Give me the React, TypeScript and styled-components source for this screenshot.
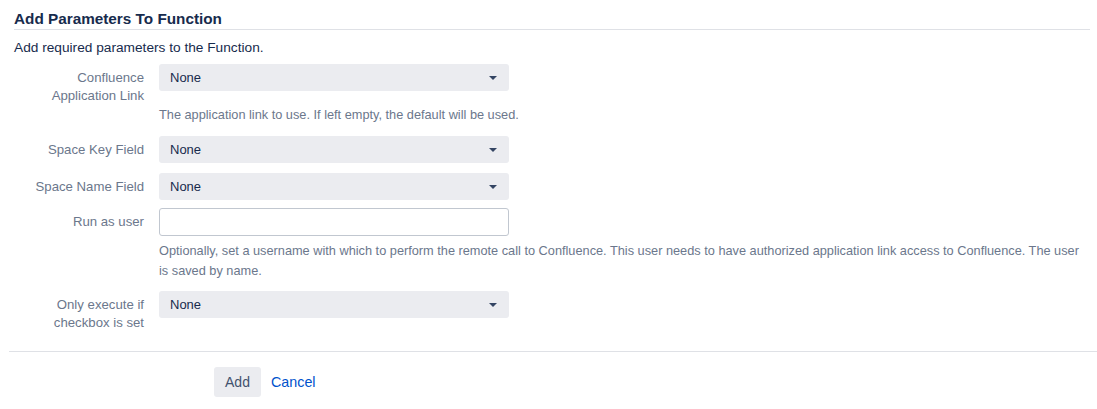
import React from "react";
import styled, { createGlobalStyle } from "styled-components";

const GlobalStyle = createGlobalStyle`
  body {
    margin: 0;
    background: #fff;
    font-family: "Liberation Sans", Arial, sans-serif;
    color: #172b4d;
  }
`;

const Page = styled.div`
  width: 1097px;
  height: 409px;
  overflow: hidden;
  padding-top: 9px;
  box-sizing: border-box;
`;

const Header = styled.div`
  margin: 0 7px 0 14px;
  border-bottom: 1px solid #dfe1e6;
`;

const Title = styled.h2`
  margin: 0;
  font-size: 15.3px;
  font-weight: 700;
  line-height: 20px;
  color: #172b4d;
`;

const Intro = styled.p`
  margin: 8px 0 6px 14px;
  font-size: 13.7px;
  line-height: 20px;
  color: #172b4d;
`;

const Form = styled.div`
  display: flex;
  flex-direction: column;
  padding-left: 14px;
`;

const Row = styled.div<{ $gap?: number }>`
  display: grid;
  grid-template-columns: 130px 1fr;
  column-gap: 15px;
  margin-bottom: ${(p) => p.$gap ?? 9}px;
`;

const Label = styled.label`
  text-align: right;
  font-size: 13.2px;
  line-height: 18px;
  color: #6b778c;
  padding-top: 5px;
`;

const Field = styled.div`
  display: flex;
  flex-direction: column;
`;

const Select = styled.div`
  width: 350px;
  height: 27px;
  box-sizing: border-box;
  background: #ebecf0;
  border-radius: 3px;
  display: flex;
  align-items: center;
  justify-content: space-between;
  padding: 0 12px 0 11px;
  font-size: 13px;
  color: #172b4d;
`;

const Caret = styled.span`
  width: 0;
  height: 0;
  border-left: 4px solid transparent;
  border-right: 4px solid transparent;
  border-top: 4px solid #344563;
`;

const TextInput = styled.input`
  width: 350px;
  height: 28px;
  box-sizing: border-box;
  border: 1px solid #c1c7d0;
  border-radius: 3px;
  background: #fff;
  outline: none;
  font: inherit;
  font-size: 13px;
`;

const Help = styled.div<{ $top: number }>`
  margin-top: ${(p) => p.$top}px;
  width: 930px;
  font-size: 12.75px;
  line-height: 20px;
  color: #6b778c;
`;

const Footer = styled.div`
  margin: 19px 0 0 9px;
  border-top: 1px solid #dfe1e6;
  padding: 15px 0 0 205px;
  display: flex;
  align-items: center;
  gap: 10px;
`;

const Button = styled.button`
  height: 30px;
  width: 47px;
  padding: 0;
  border: none;
  border-radius: 3px;
  background: #ebecf0;
  color: #42526e;
  font-family: inherit;
  font-size: 14px;
`;

const LinkButton = styled.a`
  color: #0052cc;
  font-size: 14.3px;
  text-decoration: none;
`;

const SelectField = ({ value = "None" }: { value?: string }) => (
  <Select>
    <span>{value}</span>
    <Caret />
  </Select>
);

export default function App() {
  return (
    <Page>
      <GlobalStyle />
      <Header>
        <Title>Add Parameters To Function</Title>
      </Header>
      <Intro>Add required parameters to the Function.</Intro>
      <Form>
        <Row $gap={11}>
          <Label>Confluence Application Link</Label>
          <Field>
            <SelectField />
            <Help $top={14}>The application link to use. If left empty, the default will be used.</Help>
          </Field>
        </Row>
        <Row $gap={10}>
          <Label>Space Key Field</Label>
          <Field>
            <SelectField />
          </Field>
        </Row>
        <Row $gap={8}>
          <Label>Space Name Field</Label>
          <Field>
            <SelectField />
          </Field>
        </Row>
        <Row $gap={10}>
          <Label>Run as user</Label>
          <Field>
            <TextInput type="text" />
            <Help $top={5}>
              Optionally, set a username with which to perform the remote call to Confluence. This
              user needs to have authorized application link access to Confluence. The user is saved
              by name.
            </Help>
          </Field>
        </Row>
        <Row $gap={0}>
          <Label>Only execute if checkbox is set</Label>
          <Field>
            <SelectField />
          </Field>
        </Row>
      </Form>
      <Footer>
        <Button>Add</Button>
        <LinkButton href="#">Cancel</LinkButton>
      </Footer>
    </Page>
  );
}
